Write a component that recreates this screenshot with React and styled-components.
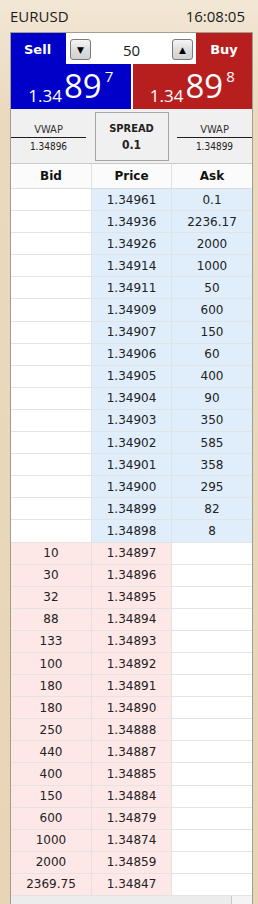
import React from 'react';
import styled, { createGlobalStyle } from 'styled-components';

const GlobalStyle = createGlobalStyle`
  html, body {
    margin: 0;
    padding: 0;
  }
  body {
    width: 258px;
    height: 904px;
    overflow: hidden;
    font-family: "DejaVu Sans", Verdana, sans-serif;
  }
`;

const SELL_BLUE = '#0000c8';
const BUY_RED = '#b71f1f';
const ASK_BG = '#e0edfb';
const BID_BG = '#fde7e7';

const askRows = [
  ['1.34961', '0.1'],
  ['1.34936', '2236.17'],
  ['1.34926', '2000'],
  ['1.34914', '1000'],
  ['1.34911', '50'],
  ['1.34909', '600'],
  ['1.34907', '150'],
  ['1.34906', '60'],
  ['1.34905', '400'],
  ['1.34904', '90'],
  ['1.34903', '350'],
  ['1.34902', '585'],
  ['1.34901', '358'],
  ['1.34900', '295'],
  ['1.34899', '82'],
  ['1.34898', '8'],
];

const bidRows = [
  ['10', '1.34897'],
  ['30', '1.34896'],
  ['32', '1.34895'],
  ['88', '1.34894'],
  ['133', '1.34893'],
  ['100', '1.34892'],
  ['180', '1.34891'],
  ['180', '1.34890'],
  ['250', '1.34888'],
  ['440', '1.34887'],
  ['400', '1.34885'],
  ['150', '1.34884'],
  ['600', '1.34879'],
  ['1000', '1.34874'],
  ['2000', '1.34859'],
  ['2369.75', '1.34847'],
];

const Window = styled.div`
  width: 258px;
  height: 904px;
  box-sizing: border-box;
  padding: 0 5px 0 10px;
  background: linear-gradient(#f2e7d5, #ead9bd 120px, #e8d5b6);
  display: flex;
  flex-direction: column;
  overflow: hidden;
`;

const TitleBar = styled.div`
  height: 32px;
  flex: none;
  display: flex;
  align-items: center;
  justify-content: space-between;
  padding: 0 8px 0 0;
  font-family: "Open Sans", sans-serif;
  font-size: 15px;
  color: #1c1c1c;
`;

const Panel = styled.div`
  border: 1px solid #a19d92;
  border-bottom: none;
  background: #f0f0f0;
  display: flex;
  flex-direction: column;
  flex: none;
`;

const QuoteTop = styled.div`
  display: flex;
  height: 31px;
`;

const SideTab = styled.div`
  width: ${({ $w }) => $w}px;
  background: ${({ $bg }) => $bg};
  color: #fff;
  font-weight: bold;
  font-size: 13px;
  display: flex;
  align-items: center;
  justify-content: ${({ $align }) => $align};
  padding: 2px 0 0 ${({ $pad }) => $pad}px;
  box-sizing: border-box;
`;

const QtyBar = styled.div`
  flex: 1;
  background: #fff;
  display: flex;
  align-items: center;
  padding: 2px 3px 0 4px;
`;

const StepButton = styled.div`
  width: 21px;
  height: 21px;
  box-sizing: border-box;
  border: 1px solid #7a7a7a;
  border-radius: 3px;
  background: linear-gradient(#f6f6f6, #dedede 50%, #d2d2d2);
  display: flex;
  align-items: center;
  justify-content: center;
  font-size: 9px;
  color: #000;
`;

const QtyValue = styled.div`
  flex: 1;
  text-align: center;
  font-family: "Open Sans", sans-serif;
  font-size: 15px;
  color: #1a1a1a;
`;

const QuoteBottom = styled.div`
  display: flex;
  gap: 2px;
  height: 45px;
  background: #fff;
`;

const PriceBox = styled.div`
  flex: 1;
  background: ${({ $bg }) => $bg};
  color: #fff;
  text-align: center;
  font-family: "Open Sans", sans-serif;
  font-size: 33px;
  line-height: 44px;
  white-space: nowrap;
  overflow: hidden;
`;

const Handle = styled.span`
  font-size: 17px;
  line-height: 1;
  vertical-align: -4px;
  margin-right: 2px;
`;

const Pip = styled.span`
  font-size: 15px;
  line-height: 1;
  vertical-align: 16px;
  margin-left: 3px;
`;

const Stats = styled.div`
  display: grid;
  grid-template-columns: 75px 1fr 75px;
  height: 54px;
  font-family: "DejaVu Sans Condensed", "DejaVu Sans", sans-serif;
  color: #222;
`;

const Vwap = styled.div`
  padding-top: 14px;
  text-align: center;
`;

const VwapLabel = styled.div`
  font-size: 11px;
  line-height: 14px;
  color: #333;
  border-bottom: 1px solid #1e1e1e;
`;

const VwapValue = styled.div`
  font-size: 10px;
  line-height: 13px;
  margin-top: 2px;
`;

const SpreadBox = styled.div`
  justify-self: center;
  margin-top: 3px;
  width: 74px;
  height: 49px;
  box-sizing: border-box;
  border: 1px solid #a6a6a6;
  text-align: center;
  font-weight: bold;
`;

const SpreadLabel = styled.div`
  font-size: 11px;
  line-height: 14px;
  padding-top: 9px;
`;

const SpreadValue = styled.div`
  font-size: 12px;
  line-height: 15px;
  margin-top: 2px;
`;

const Book = styled.div`
  border-top: 1px solid #c9c9c9;
  background: #fff;
`;

const HeaderRow = styled.div`
  display: grid;
  grid-template-columns: 81px 80px 80px;
  height: 25px;
  box-sizing: border-box;
  border-bottom: 1px solid #dcdcdc;
  background: #fbfbfb;
`;

const HeaderCell = styled.div`
  display: flex;
  align-items: center;
  justify-content: center;
  font-size: 12px;
  font-weight: bold;
  color: #111;
  border-right: 1px solid #e2e2e2;
  &:last-child {
    border-right: none;
  }
`;

const Row = styled.div`
  display: grid;
  grid-template-columns: 81px 80px 80px;
  height: 22.1px;
  box-sizing: border-box;
  border-bottom: 1px solid #e3e3e3;
`;

const Cell = styled.div`
  display: flex;
  align-items: center;
  justify-content: center;
  background: ${({ $bg }) => $bg || '#fff'};
  font-size: 12px;
  color: #222;
  border-right: 1px solid #e3e3e3;
  &:last-child {
    border-right: none;
  }
`;

const Footer = styled.div`
  display: flex;
  height: 10px;
  background: #f0f0f0;
`;

const FooterTrack = styled.div`
  flex: 1;
  background: #ececec;
  border-right: 1px solid #c8c8c8;
`;

const FooterEnd = styled.div`
  width: 20px;
  background: #f4f4f4;
`;

function QuoteSide({ bg, pip }) {
  return (
    <PriceBox $bg={bg}>
      <Handle>1.34</Handle>89<Pip>{pip}</Pip>
    </PriceBox>
  );
}

export default function App() {
  return (
    <>
      <GlobalStyle />
      <Window>
        <TitleBar>
          <span>EURUSD</span>
          <span>16:08:05</span>
        </TitleBar>
        <Panel>
          <QuoteTop>
            <SideTab $w={55} $bg={SELL_BLUE} $align="flex-start" $pad={13}>Sell</SideTab>
            <QtyBar>
              <StepButton>▼</StepButton>
              <QtyValue>50</QtyValue>
              <StepButton>▲</StepButton>
            </QtyBar>
            <SideTab $w={56} $bg={BUY_RED} $align="center" $pad={0}>Buy</SideTab>
          </QuoteTop>
          <QuoteBottom>
            <QuoteSide bg={SELL_BLUE} pip="7" />
            <QuoteSide bg={BUY_RED} pip="8" />
          </QuoteBottom>
          <Stats>
            <Vwap>
              <VwapLabel>VWAP</VwapLabel>
              <VwapValue>1.34896</VwapValue>
            </Vwap>
            <SpreadBox>
              <SpreadLabel>SPREAD</SpreadLabel>
              <SpreadValue>0.1</SpreadValue>
            </SpreadBox>
            <Vwap>
              <VwapLabel>VWAP</VwapLabel>
              <VwapValue>1.34899</VwapValue>
            </Vwap>
          </Stats>
          <Book>
            <HeaderRow>
              <HeaderCell>Bid</HeaderCell>
              <HeaderCell>Price</HeaderCell>
              <HeaderCell>Ask</HeaderCell>
            </HeaderRow>
            {askRows.map(([price, ask]) => (
              <Row key={price}>
                <Cell />
                <Cell $bg={ASK_BG}>{price}</Cell>
                <Cell $bg={ASK_BG}>{ask}</Cell>
              </Row>
            ))}
            {bidRows.map(([bid, price]) => (
              <Row key={price}>
                <Cell $bg={BID_BG}>{bid}</Cell>
                <Cell $bg={BID_BG}>{price}</Cell>
                <Cell />
              </Row>
            ))}
          </Book>
          <Footer>
            <FooterTrack />
            <FooterEnd />
          </Footer>
        </Panel>
      </Window>
    </>
  );
}
